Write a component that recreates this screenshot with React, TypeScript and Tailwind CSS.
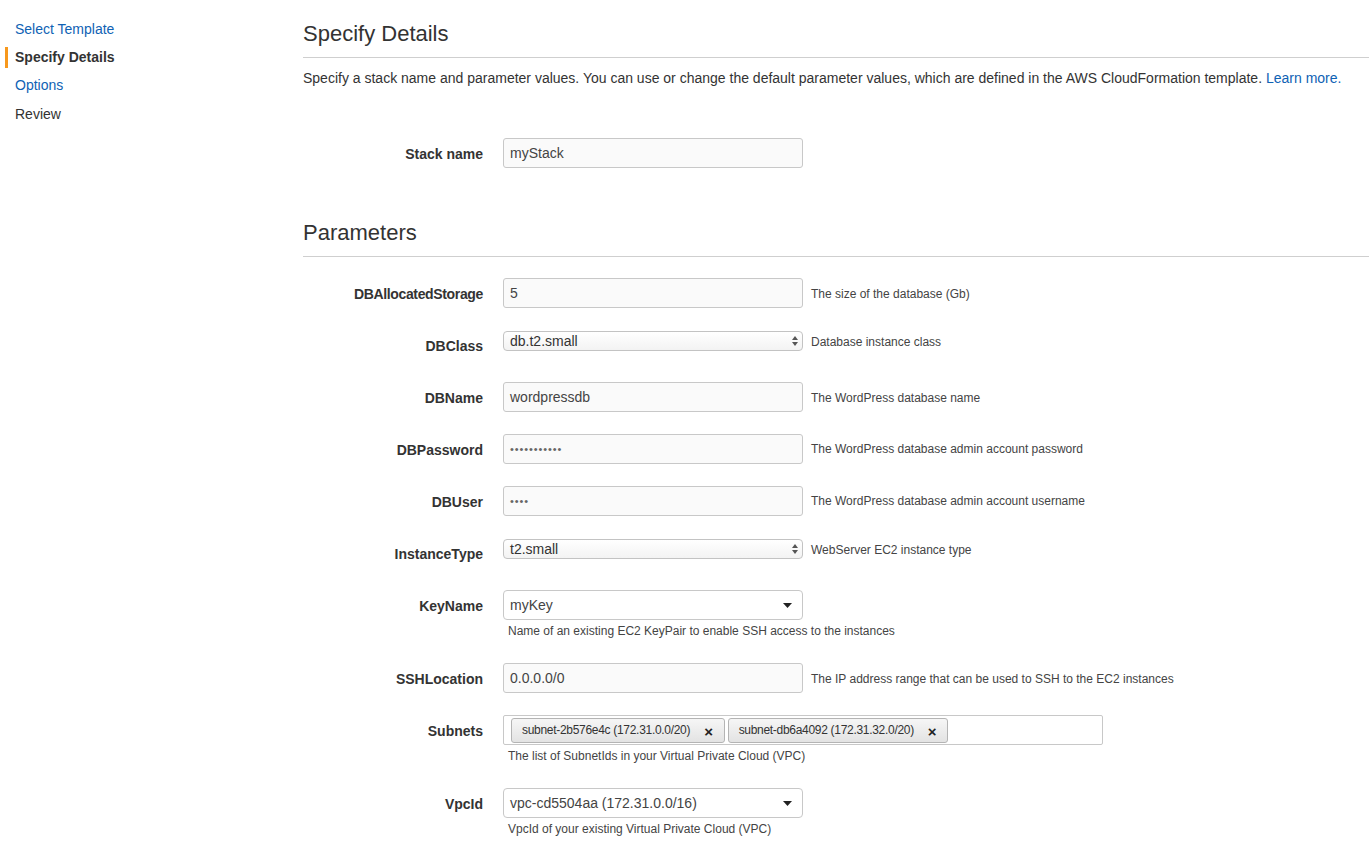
/**
 * App.tsx — CloudFormation "Specify Details" step.
 */
import type { ReactNode } from 'react';

const FONT = { fontFamily: '"Liberation Sans", Arial, sans-serif' };

type Base = { label: string; desc?: string; hint?: string; tight?: boolean };
type Field =
  | (Base & { kind: 'input'; value: string; secret?: boolean })
  | (Base & { kind: 'native'; value: string })
  | (Base & { kind: 'dropdown'; value: string })
  | (Base & { kind: 'tags'; tags: string[] });

const FIELDS: Field[] = [
  { kind: 'input', label: 'DBAllocatedStorage', value: '5', desc: 'The size of the database (Gb)', tight: true },
  { kind: 'native', label: 'DBClass', value: 'db.t2.small', desc: 'Database instance class' },
  { kind: 'input', label: 'DBName', value: 'wordpressdb', desc: 'The WordPress database name' },
  {
    kind: 'input',
    label: 'DBPassword',
    value: '•••••••••••',
    secret: true,
    desc: 'The WordPress database admin account password',
  },
  { kind: 'input', label: 'DBUser', value: '••••', secret: true, desc: 'The WordPress database admin account username' },
  { kind: 'native', label: 'InstanceType', value: 't2.small', desc: 'WebServer EC2 instance type' },
  {
    kind: 'dropdown',
    label: 'KeyName',
    value: 'myKey',
    hint: 'Name of an existing EC2 KeyPair to enable SSH access to the instances',
  },
  {
    kind: 'input',
    label: 'SSHLocation',
    value: '0.0.0.0/0',
    desc: 'The IP address range that can be used to SSH to the EC2 instances',
  },
  {
    kind: 'tags',
    label: 'Subnets',
    tags: ['subnet-2b576e4c (172.31.0.0/20)', 'subnet-db6a4092 (172.31.32.0/20)'],
    hint: 'The list of SubnetIds in your Virtual Private Cloud (VPC)',
  },
  {
    kind: 'dropdown',
    label: 'VpcId',
    value: 'vpc-cd5504aa (172.31.0.0/16)',
    hint: 'VpcId of your existing Virtual Private Cloud (VPC)',
  },
];

export default function App() {
  return (
    <div className="flex min-h-screen w-full bg-white text-[#333]" style={FONT}>
      <Sidebar />
      <main className="flex-1 pb-10">
        <SectionHeading className="mt-[21px]">Specify Details</SectionHeading>
        <p className="mt-[10px] text-[14px] leading-[20px] text-[#333]">
          Specify a stack name and parameter values. You can use or change the default parameter values, which are
          defined in the AWS CloudFormation template.{' '}
          <a className="text-[#0f62b4]">Learn more.</a>
        </p>

        <div className="mt-[50px]">
          <Row label="Stack name">
            <TextBox value="myStack" />
          </Row>
        </div>

        {/* the stack row's bottom margin collapses into this one */}
        <SectionHeading className="mt-[52px]">Parameters</SectionHeading>

        <div className="mt-[21px]">
          {FIELDS.map((f) => (
            <Row key={f.label} label={f.label} desc={f.desc} hint={f.hint} tight={f.tight}>
              {f.kind === 'input' && <TextBox value={f.value} secret={f.secret} />}
              {f.kind === 'native' && <NativeSelect value={f.value} />}
              {f.kind === 'dropdown' && <Dropdown value={f.value} />}
              {f.kind === 'tags' && <TagBox tags={f.tags} />}
            </Row>
          ))}
        </div>
      </main>
    </div>
  );
}

// ---------------------------------------------------------------------------
// Left: wizard steps
// ---------------------------------------------------------------------------
function Sidebar() {
  const steps = [
    { name: 'Select Template', state: 'link' },
    { name: 'Specify Details', state: 'active' },
    { name: 'Options', state: 'link' },
    { name: 'Review', state: 'plain' },
  ];
  return (
    <nav className="w-[303px] shrink-0 pt-[15px]">
      {steps.map((s) => (
        <div key={s.name} className="relative flex h-[28.4px] items-center pl-[15px] text-[14px]">
          {s.state === 'active' && <span className="absolute left-[5px] top-[4px] h-[21px] w-[3px] bg-[#f7981d]" />}
          <span
            className={
              s.state === 'link'
                ? 'text-[#0f62b4]'
                : s.state === 'active'
                  ? 'font-bold text-[#333]'
                  : 'text-[#333]'
            }
          >
            {s.name}
          </span>
        </div>
      ))}
    </nav>
  );
}

function SectionHeading({ children, className = '' }: { children: ReactNode; className?: string }) {
  return (
    <h2
      className={`border-b border-[#cfcfcf] pb-[10px] text-[22px] leading-[26px] font-normal text-[#333] ${className}`}
    >
      {children}
    </h2>
  );
}

// ---------------------------------------------------------------------------
// Form rows
// ---------------------------------------------------------------------------
function Row({
  label,
  desc,
  hint,
  tight,
  children,
}: {
  label: string;
  desc?: string;
  hint?: string;
  tight?: boolean;
  children: ReactNode;
}) {
  return (
    <div className="mb-[22px] flex items-start">
      <div
        className={`flex h-[30px] w-[180px] shrink-0 items-center justify-end pt-[2px] text-[14px] font-bold text-[#333] ${
          tight ? 'tracking-[-0.35px]' : ''
        }`}
      >
        {label}
      </div>
      <div className="ml-[20px]">
        <div className="flex items-baseline">
          {children}
          {desc && <span className="ml-[8px] text-[12px] text-[#444]">{desc}</span>}
        </div>
        {hint && <div className="mt-[3px] mb-[2px] pl-[5px] text-[12px] leading-[16px] text-[#444]">{hint}</div>}
      </div>
    </div>
  );
}

function TextBox({ value, secret }: { value: string; secret?: boolean }) {
  return (
    <div className="flex h-[30px] w-[300px] items-center rounded-[3px] border border-[#c8c8c8] bg-[#fafafa] px-[6px] text-[14px] text-[#444]">
      {secret ? <span className="text-[11px] tracking-[0.9px] text-[#666]">{value}</span> : value}
    </div>
  );
}

function NativeSelect({ value }: { value: string }) {
  return (
    <div className="mt-[1px] flex h-[20px] w-[300px] items-center justify-between rounded-[4px] border border-[#c3c3c3] bg-gradient-to-b from-white to-[#f3f3f3] pl-[6px] pr-[3px] text-[14px] text-[#333]">
      <span>{value}</span>
      <svg width="8" height="12" viewBox="0 0 8 12" className="text-[#555]">
        <path d="M4 1 L7 5 L1 5 Z" fill="currentColor" />
        <path d="M4 11 L7 7 L1 7 Z" fill="currentColor" />
      </svg>
    </div>
  );
}

function Dropdown({ value }: { value: string }) {
  return (
    <div className="flex h-[30px] w-[300px] items-center justify-between rounded-[4px] border border-[#c8c8c8] bg-white pl-[6px] pr-[10px] text-[14px] text-[#444]">
      <span>{value}</span>
      <svg width="9" height="5" viewBox="0 0 9 5">
        <path d="M0 0 L9 0 L4.5 5 Z" fill="#222" />
      </svg>
    </div>
  );
}

function TagBox({ tags }: { tags: string[] }) {
  return (
    <div className="flex h-[30px] w-[600px] items-center gap-[3px] rounded-[2px] border border-[#c8c8c8] bg-white pl-[7px]">
      {tags.map((t) => (
        <span
          key={t}
          className="flex h-[25px] items-center rounded-[3px] border border-[#b4b4b4] bg-gradient-to-b from-[#f6f6f6] to-[#e3e3e3] pl-[10px] pr-[11px] text-[12px] tracking-[-0.3px] text-[#333]"
        >
          {t}
          <span className="ml-[14px] mt-[3px] text-[15px] font-bold leading-none text-[#222]">×</span>
        </span>
      ))}
    </div>
  );
}
